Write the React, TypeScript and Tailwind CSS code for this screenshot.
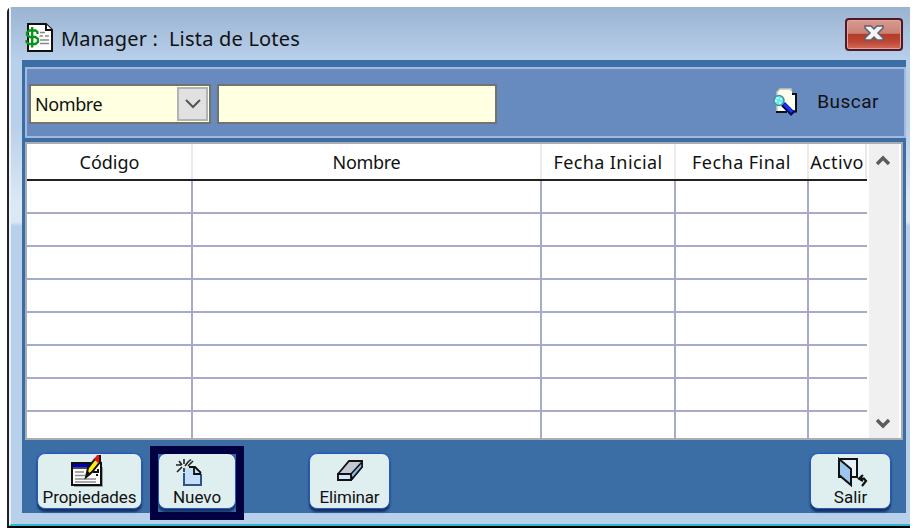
import type { ReactNode } from 'react'

const columns = [
  { label: 'Código', width: 'w-[166px]', text: 'pl-[1px]' },
  { label: 'Nombre', width: 'w-[349px]', text: 'tracking-[-0.3px]' },
  { label: 'Fecha Inicial', width: 'w-[134px]', text: 'tracking-[0.4px]' },
  { label: 'Fecha Final', width: 'w-[133px]', text: 'tracking-[0.45px]' },
  { label: 'Activo', width: 'w-[58px]', text: 'tracking-[0.4px]' },
]

const rows = [0, 1, 2, 3, 4, 5, 6, 7]

function LedgerIcon() {
  return (
    <svg width="29" height="32" viewBox="0 0 29 32" className="shrink-0">
      <path d="M3 3H21L27 9V30H3Z" fill="#fff" stroke="#111" strokeWidth="2" />
      <path d="M21 3V9H27" fill="#fff" stroke="#111" strokeWidth="2" />
      <path d="M15 11.500H20M14.500 15H18M20 15H24M15 19H24M15 22.500H24" stroke="#888" strokeWidth="1.500" />
      <path d="M12.500 13V11L10.500 9.500H4.500L2 11.500V14L4.500 16H10.500L13 18V21L10.500 23H4L1.500 21V19M7.200 6V26.500" fill="none" stroke="#069516" strokeWidth="2.300" />
    </svg>
  )
}

function SearchIcon() {
  return (
    <svg width="28" height="32" viewBox="0 0 28 32">
      <path d="M9 3H20V26H6V6Z" fill="#fffff0" stroke="#c9c9b4" strokeWidth="1.500" />
      <path d="M20 8H25V25.500H20M5 26H16" fill="none" stroke="#0b1018" strokeWidth="2" />
      <path d="M18 5H21V9H24V24H17Z" fill="#fffff0" />
      <path d="M12 18L22 28" stroke="#06065f" strokeWidth="5.500" />
      <path d="M13 18L21 26" stroke="#1636ff" strokeWidth="3" />
      <circle cx="8" cy="14.500" r="5" fill="#67edf0" stroke="#42919e" strokeWidth="1.500" />
      <path d="M5 12H8M4 15H6M8 17H10M9 13H11" stroke="#d9ffff" strokeWidth="1.500" />
    </svg>
  )
}

function PropertiesIcon() {
  return (
    <svg width="34" height="34" viewBox="0 0 34 34">
      <path d="M5 32H34V13" fill="none" stroke="#7e8a8b" strokeWidth="1.500" />
      <path d="M3 9H32V31H3Z" fill="#fff" stroke="#101010" strokeWidth="2" />
      <path d="M4 10H22V13H4Z" fill="#0000b8" />
      <path d="M4 14H20" stroke="#111" strokeWidth="1.500" />
      <path d="M6 18H15M6 21.500H16M6 25H27M6 28H27" stroke="#8b8b8b" strokeWidth="1.500" />
      <path d="M24 18H29V15M27 21H29" fill="none" stroke="#111" strokeWidth="2" />
      <path d="M17 23L19 14L26 5L31 8L23 18Z" fill="#ffee10" stroke="#111" strokeWidth="2" />
      <path d="M17 24L18.500 17L22 20Z" fill="#111" />
      <path d="M25 5L28 1H31V7L29 9Z" fill="#ed1115" />
      <path d="M31 1V8" fill="none" stroke="#111" strokeWidth="2" />
    </svg>
  )
}

function NewIcon() {
  return (
    <svg width="28" height="30" viewBox="0 0 28 30">
      <path d="M10 10H20L26 16V27H9V14Z" fill="#c6ddf8" />
      <path d="M9 15V27H26V16" fill="none" stroke="#2c558a" strokeWidth="2" />
      <path d="M14 9H20L26 15M19 9V16H26" fill="none" stroke="#111" strokeWidth="1.800" />
      <path d="M9 1V6M1 7H6M4 3L7 7M2 14L7 9M10 8L13 4L16 1.500M13 8L18 3M9 10V14" fill="none" stroke="#222" strokeWidth="1.600" />
    </svg>
  )
}

function EraserIcon() {
  return (
    <svg width="28" height="24" viewBox="0 0 28 24">
      <path d="M2 15L13 2H26V8L15 21H2Z" fill="#c3c9d1" stroke="#111" strokeWidth="1.800" />
      <path d="M2 15H15V21H2Z" fill="#cfe6fb" stroke="#111" strokeWidth="1.800" />
      <path d="M15 15L26 3V8L16 20Z" fill="#91b8e5" stroke="#111" strokeWidth="1.500" />
    </svg>
  )
}

function ExitIcon() {
  return (
    <svg width="32" height="32" viewBox="0 0 32 32">
      <path d="M2 2H20V20H2Z" fill="#e7f1fd" stroke="#111" strokeWidth="2" />
      <path d="M2 2L14 12V28L2 18Z" fill="#9bc4ef" stroke="#111" strokeWidth="2" />
      <path d="M26 18L22 21.500L26 24M22 21.500H27L29 24L25 29" fill="none" stroke="#111" strokeWidth="2.200" />
    </svg>
  )
}

interface ToolButtonProps {
  label: string
  icon: ReactNode
  className: string
  textClass?: string
  iconClass?: string
}

function ToolButton({ label, icon, className, textClass = '', iconClass = '' }: ToolButtonProps) {
  return (
    <button
      className={`flex h-[56px] shrink-0 flex-col items-center rounded-[8px] border border-[#2458bd] bg-[#dfeff0] font-['Roboto',sans-serif] text-[17px] leading-[17px] text-[#111] shadow-[0_3px_2px_#173366,0_0_2px_#2458bd] ${className}`}
    >
      <span className={`flex h-[35px] shrink-0 items-start ${iconClass}`}>{icon}</span>
      <span className={`whitespace-nowrap ${textClass}`}>{label}</span>
    </button>
  )
}

function Chevron({ up = false }: { up?: boolean }) {
  return (
    <svg width="14" height="12" viewBox="0 0 14 12" className={up ? '' : 'rotate-180'}>
      <path d="M1 10L7 4L13 10" fill="none" stroke="#5c5c5c" strokeWidth="3.500" />
    </svg>
  )
}

export default function App() {
  return (
    <div className="h-[532px] w-[916px] overflow-hidden bg-white pl-[7px] pt-[7px] font-['Noto_Sans',sans-serif] text-[#111]">
      <div className="flex h-[521px] w-[903px] flex-col rounded-tl-[5px] border-b-2 border-l-2 border-b-black border-l-[#222] bg-[#bad0ea]">
        <div className="flex min-h-0 flex-1 flex-col border-b-2 border-l-2 border-b-[#2cb9cd] border-l-[#e9eff5] bg-[linear-gradient(#9cb5d2_0px,#b9d0ea_50px,#b9d0ea_120px,#dce8f5_195px,#dce8f5_215px,#b9d0ea_219px)]">
          {/* Title bar */}
          <div className="flex h-[53px] shrink-0 items-center bg-[linear-gradient(#9ab4d1,#b8cfea)] pl-[14px] pr-[7px] pt-[7px]">
            <LedgerIcon />
            <h1 className="ml-[7px] mt-[3px] whitespace-pre text-[20px] leading-6 tracking-[0.2px]">Manager :  Lista de Lotes</h1>
            <button className="-mt-[6px] ml-auto flex h-[33px] w-[58px] items-center justify-center rounded-[4px] border-2 border-[#4d1926] bg-[linear-gradient(#d99b91_0%,#ca8176_46%,#b43c29_49%,#bd4735_75%,#d66b59_100%)] shadow-[inset_0_0_0_1px_#e5a39a]">
              <svg width="22" height="18" viewBox="0 0 22 18" className="-mt-[2px]">
                <path d="M2 2H8L11 5L14 2H20V4L15 9L20 14V16H14L11 13L8 16H2V14L7 9L2 4Z" fill="#f4f4f4" stroke="#5f6069" strokeWidth="1.500" />
              </svg>
            </button>
          </div>

          {/* Client area */}
          <div className="ml-[11px] mr-[4px] flex h-[453px] shrink-0 flex-col bg-[#3b6ea5] pl-[3px] pt-[7px]">
            <div className="flex h-[71px] shrink-0 items-center border-2 border-[#a4b8dd] bg-[#688bbf] pl-[2px] pt-[3px]">
              <div className="flex h-[40px] w-[182px] items-center border-2 border-[#70736f] bg-[#ffffe1] pl-[4px] pr-[1px]">
                <span className="text-[18px] leading-5 tracking-[-0.4px]">Nombre</span>
                <div className="ml-auto flex h-[34px] w-[31px] items-center justify-center border-2 border-[#b3b3b3] bg-[#e1e1e1]">
                  <svg width="16" height="10" viewBox="0 0 16 10">
                    <path d="M1 1L8 8L15 1" fill="none" stroke="#555" strokeWidth="2" />
                  </svg>
                </div>
              </div>
              <div className="ml-[6px] h-[40px] w-[280px] border-2 border-[#70736f] bg-[#ffffe1]" />
              <button className="ml-auto mr-[25px] flex items-center pb-[5px]">
                <SearchIcon />
                <span className="ml-[18px] font-['Roboto',sans-serif] text-[19px] leading-6 tracking-[0.5px]">Buscar</span>
              </button>
            </div>

            {/* Batch list */}
            <div className="mt-[4px] flex h-[298px] w-[878px] shrink-0 overflow-hidden border-2 border-[#a9adb1] bg-white">
              <div className="w-[840px] shrink-0">
                <div className="flex h-[37px] border-b-2 border-[#222]">
                  {columns.map((column) => (
                    <div
                      key={column.label}
                      className={`flex shrink-0 items-center justify-center whitespace-nowrap border-r-2 border-[#ebebeb] pt-[1px] text-[18px] leading-5 ${column.width} ${column.text}`}
                    >
                      {column.label}
                    </div>
                  ))}
                </div>
                {rows.map((row) => (
                  <div key={row} className="flex h-[33px] border-b-2 border-[#a6abca]">
                    {columns.map((column, i) => (
                      <div
                        key={column.label}
                        className={`shrink-0 ${column.width} ${i < 4 ? 'border-r-2 border-[#a6abca]' : ''}`}
                      />
                    ))}
                  </div>
                ))}
              </div>
              <div className="ml-[2px] flex w-[30px] flex-col items-center justify-between bg-[#f0f0f0] pb-[8px] pr-[3px] pt-[10px]">
                <Chevron up />
                <Chevron />
              </div>
            </div>

            <div className="flex h-[73px] items-start pl-[12px] pr-[15px] pt-[13px]">
              <ToolButton label="Propiedades" icon={<PropertiesIcon />} className="w-[105px]" iconClass="pr-[8px]" textClass="tracking-[-0.1px]" />
              <div className="relative ml-[16px]">
                <ToolButton label="Nuevo" icon={<NewIcon />} className="w-[78px]" iconClass="pr-[16px] pt-[4px]" />
                <div className="absolute -left-[8px] -top-[7px] h-[74px] w-[94px] border-8 border-[#000040]" />
              </div>
              <ToolButton label="Eliminar" icon={<EraserIcon />} className="ml-[73px] w-[81px]" iconClass="pt-[5px]" textClass="tracking-[-0.2px]" />
              <ToolButton label="Salir" icon={<ExitIcon />} className="ml-auto w-[81px]" iconClass="pl-[5px] pt-[3px]" />
            </div>
          </div>
        </div>
      </div>
    </div>
  )
}
